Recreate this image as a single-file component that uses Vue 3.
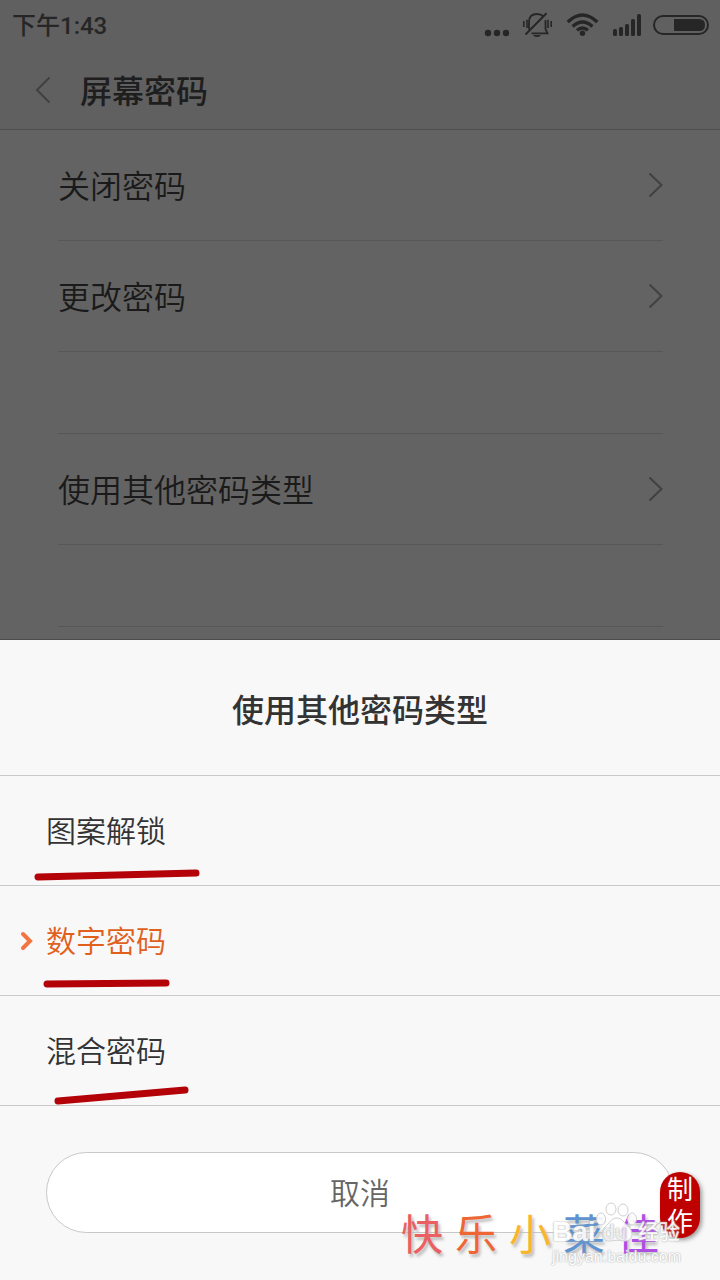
<script setup>
const groups = [
  ['关闭密码', '更改密码'],
  ['使用其他密码类型'],
]

const options = [
  { label: '图案解锁', mark: [38, 101, 196, 97] },
  { label: '数字密码', mark: [47, 98, 166, 97], selected: true },
  { label: '混合密码', mark: [58, 105, 185, 94] },
]

const signature = [
  { char: '快', color: '#ea6062' },
  { char: '乐', color: '#ee6633' },
  { char: '小', color: '#f8b62f' },
  { char: '菜', color: '#5f93cf' },
  { char: '佳', color: '#ae4fe4' },
]
</script>

<template>
  <div class="screen">
    <div class="backdrop">
      <div class="status">
        <span class="time">下午1:43</span>
        <svg class="status-icons" width="226" height="32" viewBox="484 9 226 32" aria-hidden="true">
          <g fill="#262626">
            <circle cx="488" cy="33" r="3.2" />
            <circle cx="497" cy="33" r="3.2" />
            <circle cx="506" cy="33" r="3.2" />
          </g>
          <g fill="none" stroke="#262626" stroke-width="1.8">
            <path d="M529 29.5V22Q529 14 537 14Q541 14 543.5 16.5M545.5 20V29L547.5 33.3H531.5" />
            <path d="M525.5 34.5L546.5 13.2" stroke-width="2" />
            <path d="M523.8 21V27M527 19.8V28M548 19.8V28M551.2 21V27" stroke-width="1.6" />
          </g>
          <path d="M533 35H541Q540 37 537 37Q534 37 533 35Z" fill="#262626" />
          <g fill="none" stroke="#262626" stroke-width="3.4">
            <path d="M567.7 22Q582.5 8 597.3 22" />
            <path d="M572.6 26.4Q582.5 17.5 592.4 26.4" />
            <path d="M577 30.3Q582.5 25.6 588 30.3" />
          </g>
          <circle cx="582.5" cy="33.3" r="2.7" fill="#262626" />
          <g fill="#262626">
            <rect x="613" y="29" width="4" height="7" rx="1.5" />
            <rect x="619" y="27" width="4" height="9" rx="1.5" />
            <rect x="625" y="24" width="4" height="12" rx="1.5" />
            <rect x="631" y="19" width="4" height="17" rx="1.5" />
            <rect x="637" y="14" width="4" height="22" rx="1.5" />
          </g>
          <rect x="654" y="16" width="54" height="18" rx="9" fill="none" stroke="#262626" stroke-width="2" />
          <path d="M674 19H699Q705 19 705 25T699 31H674Z" fill="#262626" />
        </svg>
      </div>

      <header class="header">
        <button class="back" type="button" aria-label="返回">
          <svg width="18" height="28" viewBox="0 0 18 28"><path d="M15.500 1.500L3 14L15.500 26.500" /></svg>
        </button>
        <h1>屏幕密码</h1>
      </header>

      <nav class="list">
        <section v-for="(group, i) in groups" :key="i" class="group">
          <button v-for="item in group" :key="item" class="row" type="button">
            <span>{{ item }}</span>
            <svg width="15" height="26" viewBox="0 0 15 26" aria-hidden="true"><path d="M1.500 1.500L13.500 13L1.500 24.500" /></svg>
          </button>
        </section>
        <section class="group"></section>
      </nav>
    </div>

    <section class="sheet" role="dialog" aria-labelledby="sheet-title">
      <h2 id="sheet-title">使用其他密码类型</h2>
      <button
        v-for="option in options"
        :key="option.label"
        class="option"
        :class="{ selected: option.selected }"
        type="button"
      >
        <svg v-if="option.selected" class="arrow" width="14" height="20" viewBox="0 0 14 20" aria-hidden="true">
          <path d="M4 3L11 10L4 17" />
        </svg>
        <span>{{ option.label }}</span>
        <svg class="mark" width="220" height="110" viewBox="0 0 220 110" aria-hidden="true">
          <line :x1="option.mark[0]" :y1="option.mark[1]" :x2="option.mark[2]" :y2="option.mark[3]" />
        </svg>
      </button>
      <div class="actions">
        <button class="cancel" type="button">取消</button>
      </div>

      <div class="signature">
        <span v-for="s in signature" :key="s.char" :style="{ color: s.color }">{{ s.char }}</span>
      </div>
      <div class="stamp"><span>制</span><span>作</span></div>
      <div class="watermark">
        <svg class="paw" width="46" height="42" viewBox="0 0 46 42" aria-hidden="true">
          <ellipse cx="6" cy="17" rx="4.500" ry="6" />
          <ellipse cx="16" cy="7" rx="5" ry="6" />
          <ellipse cx="28" cy="8" rx="5" ry="6" />
          <ellipse cx="37" cy="17" rx="4.500" ry="6" />
          <path d="M22 16C27 16 29 21 34 25C39 30 38 40 29 39C24 38 20 38 15 39C6 40 5 30 10 25C15 21 16 16 22 16Z" />
        </svg>
        <div class="brand"><b>Bai</b><b class="du">du</b><span>经验</span></div>
        <div class="site">jingyan.baidu.com</div>
      </div>
    </section>
  </div>
</template>

<style>
body {
  margin: 0;
  background: #f8f8f8;
}
</style>

<style scoped>
.screen {
  display: flex;
  flex-direction: column;
  min-height: 100vh;
  font-family: "Noto Sans CJK SC", sans-serif;
  color: #333;
}

h1,
h2 {
  margin: 0;
  font-size: 32px;
  font-weight: 500;
  line-height: 48px;
}

button {
  margin: 0;
  padding: 0;
  border: 0;
  background: none;
  color: inherit;
  font-family: inherit;
}

.backdrop {
  flex: 1;
  background: #636363;
  border-bottom: 1px solid #4c4c4c;
  box-sizing: border-box;
}

.status {
  display: flex;
  justify-content: space-between;
  align-items: center;
  height: 50px;
  padding: 0 10px 0 12px;
  background: #606060;
  color: #262626;
}

.time {
  padding-top: 2px;
  font-family: Roboto, "Noto Sans CJK SC", sans-serif;
  font-size: 24px;
  font-weight: 500;
  line-height: 36px;
}

.header {
  display: flex;
  align-items: center;
  gap: 28px;
  height: 79px;
  padding-left: 34px;
  background: #606060;
  border-bottom: 1px solid #505050;
  color: #1e1e1e;
}

h1 {
  padding-bottom: 2px;
}

.back {
  display: flex;
}

.back path,
.row path {
  fill: none;
  stroke: #414141;
  stroke-width: 2;
}

.list {
  padding: 0 57px 0 58px;
}

.group {
  margin-bottom: 81px;
}

.group + .group {
  border-top: 1px solid #575757;
}

.group:last-child {
  margin-bottom: 12px;
}

.row {
  display: flex;
  justify-content: space-between;
  align-items: center;
  width: 100%;
  height: 111px;
  border-bottom: 1px solid #575757;
  color: #1a1a1a;
  font-size: 32px;
  font-weight: 350;
  line-height: 48px;
}

.row span {
  padding-bottom: 2px;
}

.option span {
  padding-bottom: 4px;
}

.sheet {
  position: relative;
  background: #f8f8f8;
}

h2 {
  padding: 44px 0 43px;
  border-bottom: 1px solid #c9c9c9;
  text-align: center;
}

.option {
  position: relative;
  display: flex;
  align-items: center;
  width: 100%;
  height: 110px;
  padding-left: 46px;
  border-bottom: 1px solid #c9c9c9;
  font-size: 30px;
  font-weight: 350;
  line-height: 44px;
}

.selected {
  color: #e0601c;
}

.arrow {
  position: absolute;
  left: 19px;
}

.arrow path {
  fill: none;
  stroke: #f37440;
  stroke-width: 4;
  stroke-linecap: round;
}

.mark {
  position: absolute;
  top: 0;
  left: 0;
}

.mark line {
  stroke: #b30208;
  stroke-width: 7;
  stroke-linecap: round;
}

.actions {
  padding: 46px 46px 47px;
}

.cancel {
  display: block;
  width: 100%;
  height: 81px;
  padding-bottom: 4px;
  border: 1px solid #c8c8c8;
  border-radius: 41px;
  background: #fff;
  color: #666;
  font-size: 30px;
  font-weight: 350;
}

.signature {
  position: absolute;
  right: 61px;
  bottom: 20px;
  display: flex;
  gap: 12px;
  font-size: 42px;
  font-weight: 400;
  line-height: 56px;
  text-shadow: 2px 3px 3px #bbb;
}

.stamp {
  position: absolute;
  right: 20px;
  bottom: 42px;
  display: flex;
  flex-direction: column;
  align-items: center;
  width: 40px;
  padding-bottom: 2px;
  border-radius: 20px;
  background: #bf0000;
  box-shadow: 2px 2px 4px #999;
  color: #fff;
  font-size: 26px;
  line-height: 32px;
}

.watermark {
  position: absolute;
  right: 40px;
  bottom: 14px;
  width: 128px;
  color: #fff;
  text-shadow: 0 0 1px #aaa, 0 0 2px #bbb;
  opacity: 0.9;
}

.paw {
  position: absolute;
  left: 43px;
  bottom: 22px;
}

.paw path,
.paw ellipse {
  fill: #fff;
  stroke: #ccc;
  stroke-width: 1;
}

.brand {
  position: relative;
  display: flex;
  align-items: center;
  font-family: "Liberation Sans", "Noto Sans CJK SC", sans-serif;
  font-size: 28px;
  line-height: 32px;
}

.brand .du {
  padding-left: 7px;
  color: #eee;
  font-size: 20px;
}

.brand span {
  margin-left: auto;
  font-size: 21px;
  font-weight: 500;
}

.site {
  font-family: "Liberation Sans", sans-serif;
  font-size: 16px;
  line-height: 18px;
  white-space: nowrap;
}
</style>
